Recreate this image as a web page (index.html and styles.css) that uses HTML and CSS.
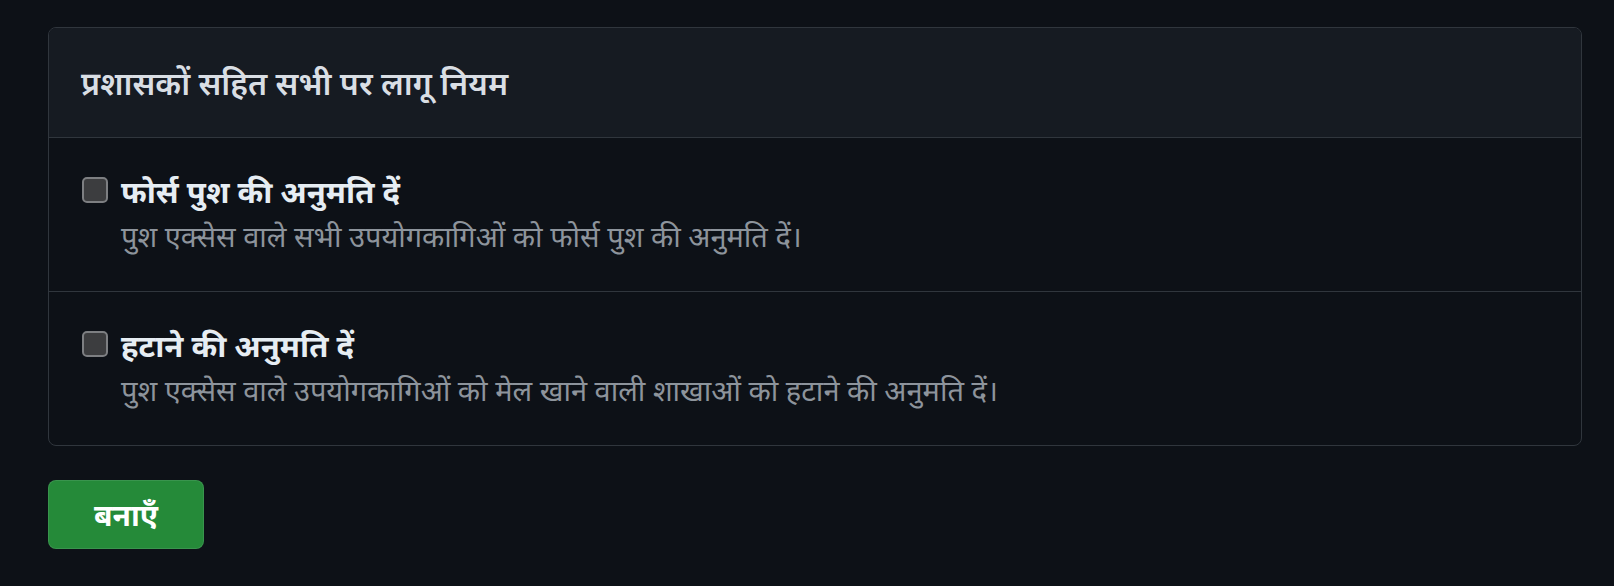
FILE: index.html
```html
<!DOCTYPE html>
<html lang="hi">
<head>
    <meta charset="UTF-8">
    <meta name="viewport" content="width=device-width, initial-scale=1.0">
    <title>नियम</title>
    <link rel="stylesheet" href="styles.css">
</head>
<body>
    <div class="rules-box">
        <div class="rules-header">
            <h3>प्रशासकों सहित सभी पर लागू नियम</h3>
        </div>
        <div class="rule-row">
            <span class="check"></span>
            <div class="rule-text">
                <div class="rule-title">फोर्स पुश की अनुमति दें</div>
                <div class="rule-desc">पुश एक्सेस वाले सभी उपयोगकागिओं को फोर्स पुश की अनुमति दें।</div>
            </div>
        </div>
        <div class="rule-row">
            <span class="check"></span>
            <div class="rule-text">
                <div class="rule-title">हटाने की अनुमति दें</div>
                <div class="rule-desc">पुश एक्सेस वाले उपयोगकागिओं को मेल खाने वाली शाखाओं को हटाने की अनुमति दें।</div>
            </div>
        </div>
    </div>
    <button class="create-btn">बनाएँ</button>
</body>
</html>
```

FILE: styles.css
```css
body {
    margin: 0;
    padding: 27px 32px 0 48px;
    background: #0d1117;
    font-family: 'Noto Sans', sans-serif;
    color: #e6edf3;
}
.rules-box {
    border: 1px solid #30363d;
    border-radius: 8px;
    overflow: hidden;
}
.rules-header {
    background: #161b22;
    border-bottom: 1px solid #30363d;
    height: 109px;
    padding: 0 32px;
    display: flex;
    align-items: center;
}
.rules-header h3 {
    margin: 0;
    font-size: 32px;
    font-weight: 600;
    color: #d9dee4;
}
.rule-row {
    display: flex;
    align-items: flex-start;
    gap: 13px;
    padding: 34px 33px 37px;
}
.rule-row + .rule-row {
    border-top: 1px solid #30363d;
}
.check {
    width: 22px;
    height: 22px;
    margin-top: 5px;
    border: 2px solid #7d7f82;
    border-radius: 5px;
    background: #3c3d3f;
    flex-shrink: 0;
}
.rule-title {
    font-size: 31px;
    font-weight: 700;
    line-height: 38px;
    color: #e6edf3;
}
.rule-desc {
    margin-top: 8px;
    font-size: 29px;
    line-height: 36px;
    color: #8d949c;
}
.create-btn {
    margin-top: 34px;
    width: 156px;
    height: 69px;
    background: #258a39;
    border: 1px solid rgba(240, 246, 252, 0.1);
    border-radius: 8px;
    color: #ffffff;
    font-family: 'Noto Sans', sans-serif;
    font-size: 30px;
    font-weight: 700;
    cursor: pointer;
}
```
